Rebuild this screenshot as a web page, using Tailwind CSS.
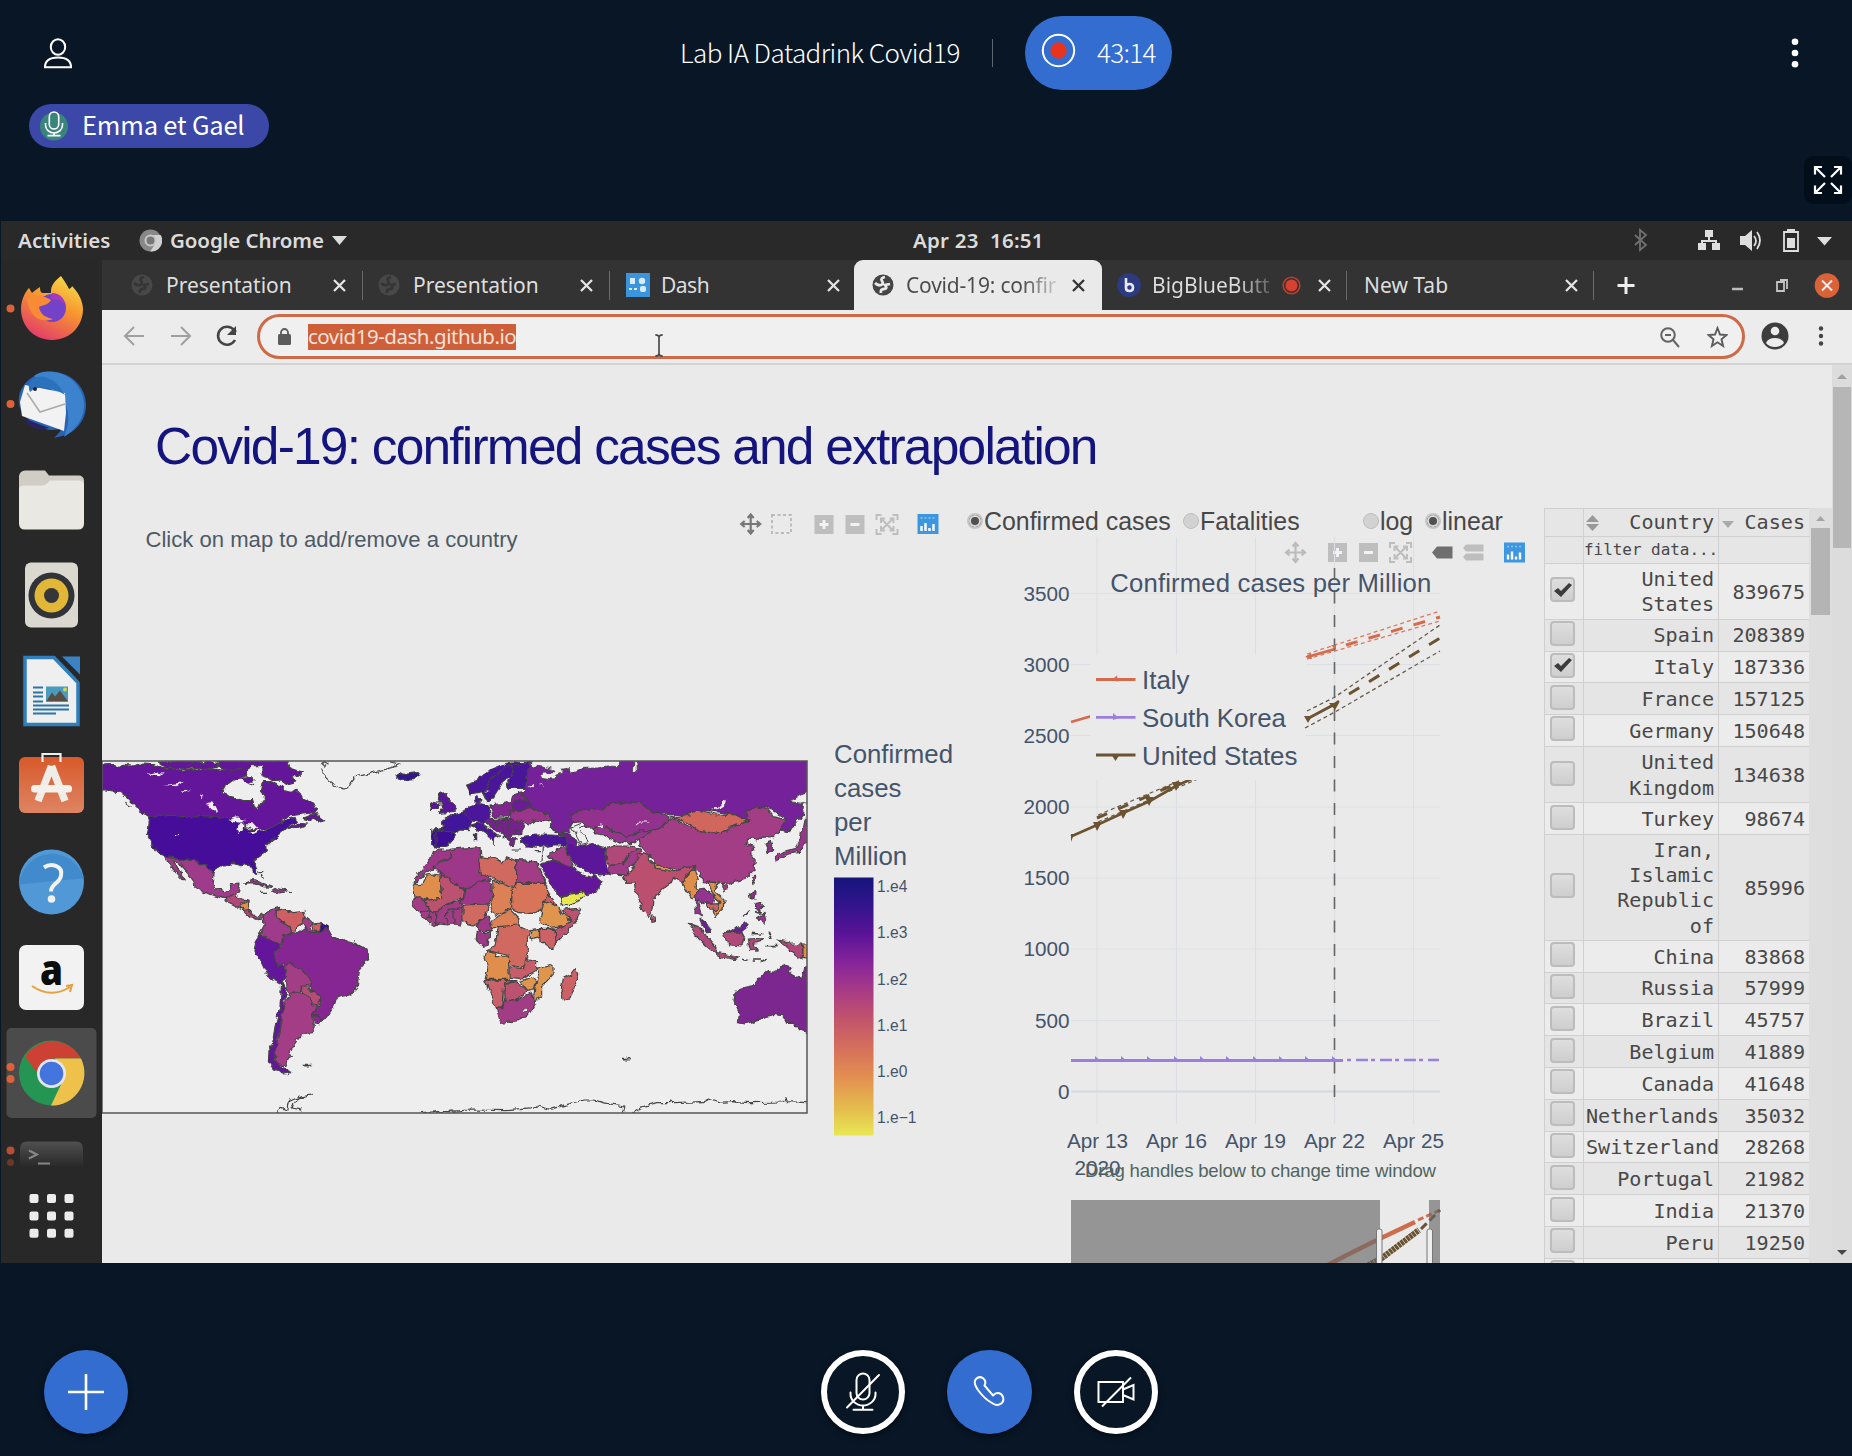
<!DOCTYPE html>
<html lang="en">
<head>
<meta charset="utf-8">
<title>Lab IA Datadrink Covid19</title>
<script src="https://cdn.jsdelivr.net/npm/@tailwindcss/browser@4"></script>
</head>
<body class="w-[1852px] h-[1456px] overflow-hidden bg-[#081626] flex flex-col font-['Noto_Sans',sans-serif]">

<!-- Conference header -->
<header class="h-[221px] shrink-0 relative text-white font-['Noto_Sans_CJK_SC',sans-serif]">
  <div class="h-[104px] flex items-start pl-[43px] pr-[48px]">
    <svg class="w-[30px] h-[32px] mt-[38px]" viewBox="0 0 30 32" fill="none" stroke="#fff" stroke-width="2"><ellipse cx="15" cy="9" rx="7.2" ry="7.7"/><path d="M2 29.300 C2 22 7 19.600 15 19.600 S28 22 28 29.300 Z"/></svg>
    <div class="flex items-center h-[74px] mt-4 ml-[607px]">
      <h1 class="text-[26px] font-light leading-none w-[280px] whitespace-nowrap tracking-[-0.530px] -mt-[3px]">Lab IA Datadrink Covid19</h1>
      <span class="w-px h-7 bg-[#5c6673] ml-8"></span>
      <div class="ml-[32px] w-[147px] h-[74px] rounded-[37px] bg-[#336dcf] flex items-center pl-4 gap-[21px]">
        <svg class="w-[35px] h-[35px] -mt-1.5" viewBox="0 0 35 35"><circle cx="17.500" cy="17.500" r="15.700" fill="none" stroke="#fff" stroke-width="2"/><circle cx="17.500" cy="17.500" r="8.200" fill="#e8341f"/></svg>
        <span class="text-[26px] font-light leading-none tracking-[-0.7px] -mt-[3px]">43:14</span>
      </div>
    </div>
    <svg class="w-[18px] h-[34px] mt-9 ml-auto" viewBox="0 0 18 34" fill="#fff"><circle cx="9" cy="5.700" r="3.300"/><circle cx="9" cy="17" r="3.300"/><circle cx="9" cy="28.200" r="3.300"/></svg>
  </div>
  <div class="ml-[29px] w-[240px] h-11 rounded-full bg-[#3b48a8] flex items-center pl-[11px] gap-[14px]">
    <svg class="w-[28px] h-[30px]" viewBox="0 0 28 30" fill="none" stroke="#fff" stroke-width="1.600"><circle cx="14" cy="15.500" r="14" fill="#39857c" stroke="none"/><rect x="9.300" y="1" width="9.400" height="17" rx="4.700"/><path d="M5.500 12v2a8.500 8 0 0 0 17 0v-2M14 22v2.500M7.500 24.600h13"/></svg>
    <span class="text-[25.500px] leading-none whitespace-nowrap tracking-[-0.200px] -mt-[4px]">Emma et Gael</span>
  </div>
  <button class="absolute right-0 top-[156px] w-12 h-12 rounded-[9px] bg-[#030e1b] flex items-center justify-center">
    <svg class="w-[30px] h-[30px]" viewBox="0 0 30 30" fill="none" stroke="#fff" stroke-width="2.200"><path d="M12 12 2 2M2 9.500V2h7M18 12 28 2M21 2h7v7.500M12 18 2 28M2 20.500V28h7M18 18l10 10M21 28h7v-7.500"/></svg>
  </button>
</header>

<!-- Shared desktop -->
<main class="h-[1042px] shrink-0 ml-px bg-[#282828] flex flex-col overflow-hidden">
  <div class="h-[39px] shrink-0 bg-[#292929] flex items-center text-[20.500px] font-semibold text-[#dcdcdc] leading-none relative -tracking-[0.1px]">
    <span class="ml-[17px] w-[121px] tracking-[0.100px]">Activities</span>
    <svg class="w-[23px] h-[23px]" viewBox="0 0 23 23"><circle cx="11.500" cy="11.500" r="11" fill="#888"/><path d="M11.500 6h10.200a11 11 0 0 1-10.500 16.500l5-8z" fill="#d0d0d0"/><circle cx="11.500" cy="11.500" r="5" fill="#777" stroke="#c8c8c8" stroke-width="2"/></svg>
    <span class="ml-2 w-[162px] whitespace-nowrap">Google Chrome</span>
    <svg class="w-[15px] h-[9px]" viewBox="0 0 15 9" fill="#dcdcdc"><path d="M0 0h15L7.500 9z"/></svg>
    <span class="absolute left-[912px] whitespace-pre tracking-[0.250px]">Apr 23  16:51</span>
    <svg class="absolute left-[1625px] top-0 w-[226px] h-[39px]" viewBox="1626 221 226 39">
      <path d="M1635 235l11 10-6 5v-20l6 5-11 10" fill="none" stroke="#707070" stroke-width="1.800"/>
      <g fill="#dedede"><path d="M1705 230h8v7h-8zM1698 243h8v7h-8zM1712 243h8v7h-8zM1740 236h5l7-6v21l-7-6h-5zM1817 237h15l-7.500 8.500z"/><path d="M1708 237h2v3h7v3h-2v-1h-12v1h-2v-3h7z"/><path d="M1787 238h8v10h-8zM1787 229h8v3h-8z"/></g>
      <path d="M1784 232h14v19h-14zM1754 236q4 5 0 10M1757 232q6 8 0 17" fill="none" stroke="#dedede" stroke-width="1.800"/>
    </svg>
  </div>

  <div class="flex flex-1 min-h-0">
    <!-- Dock -->
    <aside class="w-[101px] shrink-0 bg-[#282828] flex flex-col [&>svg]:w-[101px] [&>svg]:shrink-0">
      <svg class="h-[95px]" viewBox="1 260 101 95">
        <defs><linearGradient id="ff" x1=".8" y1="0" x2=".3" y2="1"><stop offset="0" stop-color="#f5e04c"/><stop offset=".45" stop-color="#f7952f"/><stop offset="1" stop-color="#e33a6c"/></linearGradient></defs>
        <circle cx="10.500" cy="308.500" r="4" fill="#dc6338"/>
        <path d="M61 276c5 7 6 9 8 13 2-1 3-2 3-3 6 6 11 15 11 23 0 17-13 31-31 31S21 326 21 309c0-10 5-18 8-21l3 5c2-2 5-4 8-6 0 4 1 5 2 6l9 0c-1-8 5-13 10-17z" fill="url(#ff)"/>
        <circle cx="52" cy="308" r="14" fill="#7442c8"/><path d="M27 299c7-4 16-4 24 1-3 5-8 5-12 7 1 8 8 11 14 12-13 5-24-3-26-20z" fill="#f98b37"/><path d="M52 293c9 0 13 7 13 12-4-5-8-6-14-6z" fill="#a23bbd"/>
      </svg>
      <svg class="h-[95.500px]" viewBox="1 355 101 95.500">
        <circle cx="10.500" cy="404" r="4" fill="#dc6338"/>
        <path d="M20 392c6-14 20-22 35-20 18 2 31 16 31 33 0 16-11 28-24 31l-8 2c4-4 6-6 8-10-10 4-22 2-33-8-10-8-12-18-9-28z" fill="#2863b4"/><path d="M34 376c10-8 32-5 42 8 14 17 10 39-12 53 7-17 5-30-3-40z" fill="#3c82cc"/>
        <path d="M25 385l40 8 1 20-2 18-42-15-2-14z" fill="#f2f2f2"/><path d="M27 393l13 19 25-8" fill="none" stroke="#aaa" stroke-width="1.500"/><path d="M30 392c8-8 25-4 35 3-6-12-16-20-28-18-7 2-10 8-7 15z" fill="#2b72bd"/><path d="M23 418l26 10-10 2c-8-3-13-6-16-12z" fill="#282460"/><circle cx="35" cy="389" r="2" fill="#223"/>
      </svg>
      <svg class="h-[95.500px]" viewBox="1 450.500 101 95.500"><path d="M19 476a6 6 0 0 1 6-6h20l4 5h30a5 5 0 0 1 5 5v40H19z" fill="#cfcdc4"/><path d="M19 489q0-4 5-4h18q4 0 8-5h29q5 0 5 5v38q0 6-6 6H25q-6 0-6-6z" fill="#e9e8e3"/></svg>
      <svg class="h-[95.500px]" viewBox="1 546 101 95.500"><rect x="25" y="562.500" width="53" height="65" rx="6" fill="#dbd8cf"/><circle cx="51.500" cy="595.500" r="23" fill="#303337"/><circle cx="51.500" cy="595.500" r="17" fill="#e2b636"/><circle cx="51.500" cy="595.500" r="7.500" fill="#34363a"/></svg>
      <svg class="h-[95.500px]" viewBox="1 641.500 101 95.500"><path d="M25 657h29l24 25v42H25z" fill="#efefef" stroke="#2f7fbd" stroke-width="3.500"/><path d="M57 655h5l18 19v8z" fill="#282828"/><path d="M62 656h18v18z" fill="#3a83c4"/><path d="M33 687h10M33 692h10M33 696h10M33 701h10M33 705h36M33 709h36M33 713h23" stroke="#2c75a8" stroke-width="2"/><rect x="46" y="686" width="22" height="15" fill="#4b9ac0"/><path d="M46 701l6-9 3 4 5-6 8 11z" fill="#564d43"/><circle cx="65" cy="689" r="2" fill="#cdda50"/></svg>
      <svg class="h-[95.500px]" viewBox="1 737 101 95.500"><defs><linearGradient id="sw" x2="0" y2="1"><stop stop-color="#d85a2b"/><stop offset="1" stop-color="#de8462"/></linearGradient></defs><rect x="19" y="757" width="65" height="56" rx="6" fill="url(#sw)"/><path d="M42.500 762v-8h18v8" fill="none" stroke="#eee" stroke-width="2.200"/><path d="M51.500 766L38 801M51.500 766l13.500 35" stroke="#f0ece8" stroke-width="7.500" fill="none"/><rect x="31" y="785" width="41" height="7.500" rx="3.500" fill="#f4f0ec"/></svg>
      <svg class="h-[95.500px]" viewBox="1 832.500 101 95.500"><circle cx="51.500" cy="881.500" r="32.500" fill="#5098d6"/><path d="M19.500 884a32.500 32.500 0 0 1 64-6q-30 2-64 6z" fill="#418bcd"/><path d="M44 867c7-5 19-2 17 8-1 8-10 8-10 16" stroke="#f2f2f2" stroke-width="4" fill="none"/><circle cx="51.500" cy="898.500" r="3.800" fill="#f2f2f2"/></svg>
      <svg class="h-[95.500px]" viewBox="1 928 101 95.500"><rect x="19" y="945" width="65" height="65" rx="7" fill="#f2f2f2"/><text x="51.500" y="985" font-family="Open Sans,sans-serif" font-weight="800" font-size="43" text-anchor="middle" fill="#0c0c0c" textLength="23" lengthAdjust="spacingAndGlyphs">a</text><path d="M32 986q19 13 38 1M66 986l6-1-2 7" fill="none" stroke="#e6a03c" stroke-width="2"/></svg>
      <svg class="h-[97px]" viewBox="1 1023.500 101 97"><rect x="6.500" y="1027.500" width="90" height="90" rx="5" fill="#4b4b4b"/><circle cx="10.500" cy="1066.500" r="4" fill="#dc6338"/><circle cx="10.500" cy="1078.500" r="4" fill="#dc6338"/><circle cx="51.500" cy="1072.500" r="32.500" fill="#259553"/><path d="M25 1056a32.500 32.500 0 0 1 56 2H52l-15 14z" fill="#cc4133"/><path d="M62 1082l-11 23a32.500 32.500 0 0 0 30-47H55z" fill="#eec24a"/><circle cx="51.500" cy="1073" r="14.500" fill="#e6e6ee"/><circle cx="51.500" cy="1073" r="11.800" fill="#4474dd"/></svg>
      <svg class="h-[60px]" viewBox="1 1120.500 101 60"><defs><linearGradient id="tm" x2="0" y2="1"><stop stop-color="#505050"/><stop offset="1" stop-color="#292929"/></linearGradient></defs><circle cx="10.500" cy="1150" r="4" fill="#b54f31"/><circle cx="10.500" cy="1162" r="3.500" fill="#6b3726"/><path d="M20 1166v-18q0-7 7-7h49q7 0 7 7v18z" fill="url(#tm)"/><path d="M29 1150l8 4-8 4M38 1163h12" fill="none" stroke="#888" stroke-width="2"/></svg>
      <svg class="h-[80px]" viewBox="1 1180.500 101 80" fill="#ececec"><g id="dots"><rect x="29.500" y="1193.500" width="9" height="9" rx="2"/><rect x="47" y="1193.500" width="9" height="9" rx="2"/><rect x="64.500" y="1193.500" width="9" height="9" rx="2"/></g><use href="#dots" y="17.500"/><use href="#dots" y="34.700"/></svg>
    </aside>

    <!-- Browser window -->
    <section class="flex-1 min-w-0 flex flex-col bg-[#eaeaea]">
      <div class="h-[50px] shrink-0 bg-[#333] flex items-center text-[21px] text-[#dedede] leading-none">
        <div class="w-[261px] flex items-center border-r border-[#6a6a6a] h-[29px] pl-[29px]">
          <svg class="w-[22px] h-[22px]" viewBox="0 0 22 22"><circle cx="11" cy="11" r="10.500" fill="#484848"/><path d="M3 9q3 3 6 2t1-4 3-4M9 19q-1-4 3-4t1-4l5-1" fill="none" stroke="#353535" stroke-width="2.800"/></svg>
          <span class="ml-[13px] w-[167px]">Presentation</span>
          <svg class="w-[13px] h-[13px]" viewBox="0 0 13 13" stroke="#e4e4e4" stroke-width="2.300"><path d="M1 1l11 11M12 1 1 12"/></svg>
        </div>
        <div class="w-[247px] flex items-center border-r border-[#6a6a6a] h-[29px] pl-[15px]">
          <svg class="w-[22px] h-[22px]" viewBox="0 0 22 22"><circle cx="11" cy="11" r="10.500" fill="#484848"/><path d="M3 9q3 3 6 2t1-4 3-4M9 19q-1-4 3-4t1-4l5-1" fill="none" stroke="#353535" stroke-width="2.800"/></svg>
          <span class="ml-[13px] w-[167px]">Presentation</span>
          <svg class="w-[13px] h-[13px]" viewBox="0 0 13 13" stroke="#e4e4e4" stroke-width="2.300"><path d="M1 1l11 11M12 1 1 12"/></svg>
        </div>
        <div class="w-[244px] flex items-center h-[29px] pl-[16px]">
          <svg class="w-[24px] h-[24px]" viewBox="0 0 24 24"><rect width="24" height="24" fill="#3b95dc"/><g fill="#d9ecfa"><rect x="4" y="5" width="5" height="6"/><circle cx="16" cy="8" r="3.200"/><rect x="3" y="15" width="3" height="2"/><rect x="8" y="15" width="3" height="2"/><rect x="14" y="13" width="6" height="6" rx="2"/></g></svg>
          <span class="ml-[11px] w-[166px] tracking-[-0.500px]">Dash</span>
          <svg class="w-[13px] h-[13px]" viewBox="0 0 13 13" stroke="#e4e4e4" stroke-width="2.300"><path d="M1 1l11 11M12 1 1 12"/></svg>
        </div>
        <div class="w-[248px] self-stretch bg-[#eaeaea] rounded-t-[9px] flex items-center pl-[18px] text-[#4b4b4b]">
          <svg class="w-[22px] h-[22px]" viewBox="0 0 22 22"><circle cx="11" cy="11" r="10.500" fill="#454545"/><path d="M3 9q3 3 6 2t1-4 3-4M9 19q-1-4 3-4t1-4l5-1" fill="none" stroke="#eaeaea" stroke-width="2.800"/></svg>
          <span class="ml-3 w-[166px] whitespace-nowrap bg-linear-to-r from-[#4b4b4b] from-70% to-transparent to-95% bg-clip-text text-transparent tracking-[-0.2px] py-1">Covid-19: confir</span>
          <svg class="w-[13px] h-[13px]" viewBox="0 0 13 13" stroke="#333" stroke-width="2.300"><path d="M1 1l11 11M12 1 1 12"/></svg>
        </div>
        <div class="w-[245px] flex items-center h-[29px] border-r border-[#6a6a6a] pl-[15px]">
          <svg class="w-[24px] h-[24px]" viewBox="0 0 24 24"><circle cx="12" cy="12" r="12" fill="#2d3a80"/><path d="M9 5v10q0 3 3.500 3t3.500-3.500-3.500-3.500T9 14" fill="none" stroke="#e7e7f5" stroke-width="2.600"/></svg>
          <span class="ml-[11px] w-[130px] whitespace-nowrap bg-linear-to-r from-[#dedede] from-65% to-transparent to-100% bg-clip-text text-transparent py-1">BigBlueButt</span>
          <svg class="w-[19px] h-[19px]" viewBox="0 0 19 19"><circle cx="9.500" cy="9.500" r="8.300" fill="none" stroke="#c23a2d" stroke-width="1.600"/><circle cx="9.500" cy="9.500" r="6" fill="#d8402f"/></svg>
          <svg class="w-[13px] h-[13px] ml-[17px]" viewBox="0 0 13 13" stroke="#e4e4e4" stroke-width="2.300"><path d="M1 1l11 11M12 1 1 12"/></svg>
        </div>
        <div class="w-[247px] flex items-center h-[29px] border-r border-[#6a6a6a] pl-[17px]">
          <span class="w-[201px]">New Tab</span>
          <svg class="w-[13px] h-[13px]" viewBox="0 0 13 13" stroke="#e4e4e4" stroke-width="2.300"><path d="M1 1l11 11M12 1 1 12"/></svg>
        </div>
        <svg class="w-[258px] h-[50px]" viewBox="1594 260 258 50"><path d="M1617.500 285.500h17M1626 277v17" stroke="#eee" stroke-width="3"/><path d="M1732 289h11" stroke="#bbb" stroke-width="2.500"/><path d="M1777 282h7v9h-7zM1780 280h7v9" fill="none" stroke="#c4c4c4" stroke-width="1.800"/><circle cx="1827" cy="285.500" r="12.300" fill="#da6238"/><path d="M1822 280.500l10 10m0-10-10 10" stroke="#f6ece8" stroke-width="2"/></svg>
      </div>
      <div class="h-[55px] shrink-0 border-b-2 border-[#d2d2d2] bg-[#ececec] flex items-start relative">
        <svg class="w-[155px] h-[52px]" viewBox="102 310 155 52" fill="none" stroke="#a0a0a0" stroke-width="2"><path d="M144 336h-18M134 327l-9 9 9 9M171 336h18M181 327l9 9-9 9"/><path d="M235 340a9 9 0 1 1-1-10l2 2" stroke="#444" stroke-width="2.600"/><path d="M236 326v9h-9z" fill="#444" stroke="none"/></svg>
        <div class="w-[1488px] h-[45px] mt-1 rounded-full border-3 border-[#cf6a47] bg-[#f0f0f0] flex items-center pl-[18px] pr-[14px]">
          <svg class="w-[13px] h-[18px]" viewBox="0 0 13 18"><rect y="6" width="13" height="11" rx="1.500" fill="#5b5b5b"/><path d="M3 7V4.500a3.500 3.500 0 0 1 7 0V7" fill="none" stroke="#5b5b5b" stroke-width="1.800"/></svg>
          <span class="ml-[17px] w-[208px] h-[26px] bg-[#cf5f38] text-[#f3e1da] text-[20.500px] leading-[24px] whitespace-nowrap tracking-[-0.480px]">covid19-dash.github.io</span>
          <svg class="ml-auto w-[20px] h-[22px]" viewBox="0 0 20 22" fill="none" stroke="#636363" stroke-width="2"><circle cx="8" cy="9" r="6.800"/><path d="M13 14l6 7M5 9h6"/></svg>
          <svg class="ml-[27px] w-[21px] h-[22px]" viewBox="0 0 21 22" fill="none" stroke="#5c5c5c" stroke-width="1.900"><path d="M10.500 2l2.500 6.500 6.500.5-5 4.300 1.600 6.700-5.600-3.700-5.600 3.700 1.600-6.700L1.500 9l6.500-.5z"/></svg>
        </div>
        <svg class="w-[106px] h-[52px]" viewBox="1745 310 106 52"><circle cx="1775" cy="336" r="13.500" fill="#3d3d3d"/><circle cx="1775" cy="331" r="4.300" fill="#ececec"/><path d="M1766 343q2-5 9-5t9 5q-3 4-9 4t-9-4z" fill="#ececec"/><g fill="#444"><circle cx="1821" cy="328.500" r="2.200"/><circle cx="1821" cy="336" r="2.200"/><circle cx="1821" cy="343.500" r="2.200"/></g></svg>
        <svg class="absolute left-[551px] top-[23px] w-[12px] h-[25px] z-10" viewBox="0 0 12 27" fill="none" stroke="#4a4a4a" stroke-width="1.800"><path d="M2 2q4 0 4 3v17q0 3-4 3M10 2q-4 0-4 3v17q0 3 4 3"/></svg>
      </div>

      <div class="flex-1 min-h-0 flex">
        <div class="w-[1730px] shrink-0 flex flex-col overflow-hidden font-['Liberation_Sans',Arial,sans-serif]">
          <h2 class="h-[140px] shrink-0 pl-[53px] pt-[51px] text-[51.500px] leading-[60px] tracking-[-1.800px] text-[#14147e] whitespace-nowrap">Covid-19: confirmed cases and extrapolation</h2>
          <div class="flex flex-1 min-h-0">

            <!-- World map figure -->
            <svg class="w-[852px] h-[758px] shrink-0" viewBox="102 505 852 758" font-family="Liberation Sans,Arial,sans-serif">
              <defs>
                <linearGradient id="cb" x2="0" y2="1"><stop stop-color="#17147c"/><stop offset=".1" stop-color="#30148c"/><stop offset=".22" stop-color="#5b1398"/><stop offset=".33" stop-color="#86259a"/><stop offset=".44" stop-color="#a83b85"/><stop offset=".55" stop-color="#c2546b"/><stop offset=".67" stop-color="#d6725a"/><stop offset=".78" stop-color="#e39150"/><stop offset=".9" stop-color="#e4be4d"/><stop offset="1" stop-color="#e8e752"/></linearGradient>
                <clipPath id="mapclip"><rect x="102" y="761" width="705" height="352"/></clipPath>
                <filter id="coast" filterUnits="userSpaceOnUse" x="95" y="755" width="720" height="365"><feTurbulence type="fractalNoise" baseFrequency=".16" numOctaves="2" seed="4"/><feDisplacementMap in="SourceGraphic" scale="6" xChannelSelector="R" yChannelSelector="G"/></filter>
                <g id="zoomtools" fill="#bebebe"><path d="M0 0h19v19H0z"/><path d="M31 0h19v19H31z"/><path d="M5 9.500h9M9.500 5v9M36 9.500h9" stroke="#f2f2f2" stroke-width="3"/><path d="M62 5V0h5M78 0h5v5M83 14v5h-5M67 19h-5v-5" fill="none" stroke="#bebebe" stroke-width="2"/><path d="M67 4l11 11M78 4 67 15M66.500 8V3.500h4M75 3.500h4V8M79 11v4.500h-4M70.500 15.500h-4V11" fill="none" stroke="#bebebe" stroke-width="2"/></g>
                <g id="logo"><rect width="21" height="20" fill="#3d97e0"/><path d="M4 17v-5M8 17V9M12 17v-3M16 17v-7" stroke="#fff" stroke-width="2.400"/><path d="M3 4h15" stroke="#8cc4f2" stroke-width="1.500" stroke-dasharray="2 2"/></g>
                <path id="move" d="M-9 0H9M0-9V9M-6-3l-3.500 3L-6 3M6-3l3.500 3L6 3M-3-6l3-3.500L3-6M-3 6l3 3.500L3 6" fill="none" stroke-width="2.200"/>
              </defs>
              <text x="145.500" y="546.500" font-size="22.100" fill="#4d5a66">Click on map to add/remove a country</text>
              <use href="#move" x="750.700" y="524" stroke="#777"/>
              <rect x="772" y="515" width="19" height="18" fill="none" stroke="#bbb" stroke-width="2" stroke-dasharray="3 2.500"/>
              <use href="#zoomtools" x="814.500" y="515"/><use href="#logo" x="917.500" y="514"/>

              <rect x="102" y="761" width="705" height="352" fill="#eeeeee"/>
              <g clip-path="url(#mapclip)"><g filter="url(#coast)" stroke="#444" stroke-width="3.500" stroke-linejoin="round">
                <g transform="translate(90 740) scale(.33333)">
                  <path fill="#63159a" d="M30 76L60 74 80 80 100 76 125 78 150 72 190 74 205 80 240 86 270 92 300 88 335 92 370 88 420 92 450 84 470 92 465 110 430 120 405 138 395 155 420 172 460 182 485 182 490 200 502 210 510 195 524 175 514 155 520 125 545 125 570 135 585 152 605 157 618 148 630 160 640 178 665 190 680 205 672 218 640 222 600 228 580 240 566 255 540 262 520 268 490 270 440 240 415 232 175 228 150 215 135 195 110 170 90 155 30 148z"/>
                  <path fill="#63159a" d="M385 62L590 62 600 85 637 97 625 108 608 106 617 125 592 132 575 120 548 122 530 112 515 108 520 78 490 76 470 90 450 85 420 96 400 90 385 75zM205 66L290 64 380 66 385 82 345 88 300 84 260 88 225 80zM640 235L670 222 680 215 690 232 704 242 690 246 672 238 655 240zM595 262l30-12 25 2-35 14z"/>
                  <path fill="#45109a" d="M175 228L415 232 440 240 480 272 525 270 566 255 590 240 615 232 620 245 590 262 570 280 545 300 530 315 532 335 505 350 492 362 500 385 499 403 488 400 478 372 450 377 430 370 405 378 385 378 372 395 367 398 345 375 325 370 310 358 265 358 228 350 200 335 185 310 172 285 178 245z"/>
                  <path fill="#eee" stroke="none" d="M170 103l25-6 27 4-15 8zM218 135l35-4 32-6-25 14zM272 154l28-3-20 7zM330 168l10-5-6 12zM348 190l18-4 8 12 8 18-14-8-12-12zM415 240l25-8 25 8-12 8-20-2zM445 255l15-8-2 25-10 10-5-12zM465 250l25 0 12 14-15 6-8-10-8-2zM478 278l50-13-40 18zM258 285h6v4h-6z"/>
                  <path fill="#63159a" d="M450 118l30-8 15 12-20 4M475 126l20 8"/>
                  <path fill="#9e3a8a" d="M228 350L265 358 310 358 330 372 345 375 365 398 372 402 370 425 378 445 400 452 418 448 424 434 450 432 446 448 435 465 420 480 405 476 375 468 345 458 315 442 312 425 295 402 270 375 248 362 262 385 283 420 275 418 255 395 240 375z"/>
                  <path fill="#ae4878" d="M405 476L435 463 445 476 477 480 474 505 482 520 500 530 515 520 523 532 500 538 480 530 460 510 430 495 412 487z"/>
                  <path fill="#e08c4c" d="M448 495L477 482 474 508 463 512z"/>
                  <path fill="#8d3b83" d="M465 430L490 420 520 432 545 442 520 440 490 428zM545 455L560 444 588 452 570 459zM512 457h18M595 457h14M505 395h18M514 402l6 15M106 190l16 12"/>
                  <path fill="#9e3a8a" d="M520 525L545 508 570 502 560 520 572 545 600 560 602 580 578 590 572 614 548 603 525 590 508 585 522 560z"/>
                  <path fill="#ce6064" d="M557 512L575 508 610 518 642 514 645 530 640 548 620 560 618 576 602 583 598 560 575 545 562 535z"/>
                  <path fill="#a03c88" d="M645 530L665 545 662 568 680 578 655 578 645 562 638 548z"/><path fill="#ce6064" d="M667 552L694 549 691 574 673 574z"/><path fill="#30128c" d="M694 549L713 562 702 577 690 573z"/>
                  <path fill="#862893" d="M578 590L602 582 620 580 645 562 655 578 690 576 713 565 728 592 760 600 800 612 833 630 836 655 808 690 803 730 790 757 760 768 738 778 732 800 712 828 700 842 668 820 690 795 692 772 664 750 662 720 640 695 610 680 585 672 560 672 550 650 560 630 575 618z"/>
                  <path fill="#8a2892" d="M668 820L700 840 690 851 670 849z"/>
                  <path fill="#64169c" d="M508 585L525 590 548 603 572 615 555 635 552 655 562 672 582 675 585 715 575 730 545 714 528 697 508 655 492 632 498 605z"/>
                  <path fill="#a33c86" d="M585 675L605 670 620 682 640 692 660 718 664 735 640 738 630 755 600 758 588 745z"/>
                  <path fill="#64169c" d="M575 728L590 758 582 790 572 850 560 920 552 960 570 980 608 997 585 1002 550 987 535 965 537 935 548 910 555 860 570 800z"/>
                  <path fill="#a33c86" d="M600 758L630 756 640 765 665 778 668 795 688 790 668 820 665 848 675 860 670 877 635 882 632 893 612 896 622 905 610 920 600 937 606 947 590 958 588 976 568 976 555 958 562 920 575 850 580 800z"/>
                  <path fill="#b34d78" d="M633 742L655 735 664 752 690 772 686 792 668 792 660 775 638 762z"/>
                  <path fill="#64169c" d="M640 973h26l-8 5h-14z"/>
                  <path fill="none" d="M692 70q14-8 25 2l-12 10zM695 85l10 25 20 20 18 12 28 6 8-18 16-20 35-6 40-12 40-10 20-10-30-6M560 1118l10-16 20 8 5-24 25-12 50-11-50 16-14 22 24 5 8 14M1015 1118l20 0 10-4 60 2 20-6"/>
                  <path fill="#33128f" d="M915 105L925 98 945 103 985 98 992 108 970 119 935 121 920 112z"/>
                </g>
                <g transform="translate(440 740) scale(.33333)">
                  <path fill="#5a149a" d="M0 160L18 158 30 182 52 203 48 213 20 218 -2 220 10 205 2 188 -5 178zM-28 190L-12 182 0 195 -5 208 -30 208z"/>
                  <path fill="#3c1096" d="M-25 270L0 268 45 275 40 295 20 318 -5 323 -25 316zM-12 268v50"/>
                  <path fill="#43129a" d="M-8 268L12 262 5 245 22 232 50 222 75 215 95 230 92 250 88 272 60 270 45 278 0 270z"/>
                  <path fill="#4c159c" d="M70 217L90 200 110 190 145 195 152 235 130 245 95 240z"/><path fill="#4c159c" d="M105 185L108 168 127 178 118 190z"/>
                  <path fill="#48129a" d="M80 132L110 122 150 90 200 70 270 66 268 90 260 145 205 145 200 125 215 105 190 120 178 142 172 152 158 174 140 182 128 155 90 162z"/><path fill="none" d="M135 160l20-45 50-40 15 5-5 25M220 80l22-5"/>
                  <path fill="#80278f" d="M150 195L210 188 215 165 245 158 270 185 280 205 215 215 210 230 160 232z"/><path fill="#6a1d98" d="M215 195l25-18 30 8 6 18-55 6z"/>
                  <path fill="#9b358c" d="M210 215L280 205 330 225 335 240 310 245 285 240 270 252 250 245 215 240z"/>
                  <path fill="#4c159c" d="M92 255L130 245 135 260 155 272 178 290 165 294 160 310 150 290 130 275 110 270zM103 280h10v22h-10z"/>
                  <path fill="#75248f" d="M135 240L200 235 252 250 245 280 215 285 210 295 235 300 212 318 195 290 165 268 150 262z"/><path fill="none" d="M152 235l20 20 28-18 10 30 30 4M185 260l5 30 25-5M215 330h25"/>
                  <path fill="#4a139a" d="M245 290L290 285 340 285 375 290 385 315 340 315 300 322 260 318 245 305z"/>
                  <path fill="#75229a" d="M270 66L270 50 1120 50 1110 155 1075 165 1050 185 1090 195 1088 225 1060 260 1040 275 1020 270 1035 235 980 200 935 205 925 240 890 225 830 215 780 210 750 222 690 225 640 215 600 190 560 185 500 195 495 208 420 212 395 225 400 245 385 280 350 275 330 262 335 235 330 225 280 205 270 185 245 165 255 150 262 100z"/>
                  <path fill="#eee" stroke-width="2.500" d="M275 50L540 50 538 80 500 78 470 84 430 85 400 98 388 97 385 85 360 88 370 98 345 108 335 120 305 115 300 100 345 98 340 88 275 76zM582 60h8l2 34-12 6zM1050 185l30-22 22-8 20 0 0 40z"/>
                  <path fill="#eee" stroke="none" d="M265 140l18-5-2 10zM300 135l8-3 4 8zM812 210q30-5 42-30 6 5 0 15-15 18-42 15zM136 156l10-2-2 5z"/>
                  <path fill="#93308e" d="M395 225L420 212 495 208 500 195 560 185 600 190 640 215 690 232 660 265 640 272 600 272 560 290 530 280 500 262 470 262 440 265 425 245 400 248z"/>
                  <path fill="#963490" d="M460 262L500 262 530 280 560 290 600 272 640 272 615 296 570 312 560 300 540 310 490 285 465 280z"/>
                  <path fill="#6a1d98" d="M345 275L385 285 410 300 415 315 385 315 375 290z"/>
                  <path fill="#eee" stroke-width="3" d="M395 262L428 248 436 256 415 265 433 285 442 312 425 316 412 290z"/>
                  <path fill="none" stroke="#eee" d="M588 255l10-9h30M474 260l10-6v10"/>
                  <path fill="#a33d85" d="M640 272L665 262 690 235 720 245 780 275 840 280 925 240 920 215 950 200 980 205 1000 230 1037 238 1018 275 1000 290 960 292 945 300 940 292 915 310 948 320 930 340 946 360 942 390 915 415 860 432 830 428 790 425 775 390 720 390 650 375 625 345 605 320 600 298zM845 438l15-3 4 12-14 8zM932 410l13-5-6 26z"/>
                  <path fill="#d0665c" d="M695 232L750 222 768 210 800 216 830 222 890 225 925 242 870 262 840 280 780 275 740 248z"/>
                  <path fill="#8e2f90" d="M975 312L995 305 1001 330 985 335z"/><path fill="#9a358d" d="M1003 352L1030 335 1065 325 1080 300 1085 275 1092 240 1104 235 1104 290 1095 310 1082 337 1045 342 1010 360z"/>
                  <path fill="#5b159a" d="M375 318L390 312 430 320 455 310 497 325 498 370 507 402 480 405 440 397 425 382 405 372 385 345z"/>
                  <path fill="#b04a79" d="M498 330L530 318 572 318 600 325 565 345 550 370 510 377 500 365z"/>
                  <path fill="#9f3a87" d="M507 377L550 372 565 345 598 322 608 340 590 370 560 385 567 407 545 404 505 400z"/>
                  <path fill="#ba506f" d="M595 345L610 338 630 345 625 360 645 378 700 395 740 382 765 380 745 400 728 428 715 425 700 410 692 430 665 450 640 480 635 515 622 532 610 510 590 460 582 432 560 433 550 410 570 395 585 375zM633 525l12 5 3 14-12 4z"/>
                  <path fill="#df8e4c" d="M640 372L700 388 695 397 650 388z"/>
                  <path fill="#df8e4c" d="M745 402L765 385 775 420 765 440 777 470 755 477 740 455 725 430zM805 425L835 430 825 455 852 480 850 505 825 530 820 515 840 490 815 455z"/>
                  <path fill="#96338f" d="M770 450L795 448 825 470 820 490 795 490 775 480 788 530 768 522z"/><path fill="#cc6163" d="M800 490L837 488 830 512 810 510z"/>
                  <path fill="#6c1f98" d="M780 535L800 550 812 577 800 578 785 555zM850 580L880 570 912 545 925 558 905 575z"/>
                  <path fill="#b04a79" d="M748 550L775 560 800 590 828 622 825 640 800 620 770 590zM825 640L860 645 895 652 885 658 830 648zM850 580L905 575 913 592 905 618 875 615 855 600zM925 600L950 598 970 596 960 606 938 610 952 630 932 632zM1010 597L1035 600 1045 612 1085 612 1085 657 1060 640 1035 615z"/>
                  <path fill="none" stroke-width="5" d="M905 655l20 4M935 660h22M960 665l20-10M975 617h38M985 575l8 22M932 580l35 2M910 530l18-20M945 500l20 0M945 515l20 5"/>
                  <path fill="#df8e4c" d="M1086 615L1120 615 1120 660 1086 655z"/>
                  <path fill="#93308e" d="M930 460L948 455 945 478 935 480zM945 490l15-2 10 14-10 2 0 12-12-15zM950 535l25-15 5 20-8 10z"/>
                  <path fill="#7c258f" d="M885 760L890 750 945 735 955 715 970 705 985 695 1000 697 1020 685 1030 675 1055 680 1048 700 1085 720 1095 680 1104 672 1120 672 1120 885 1080 870 1060 850 1040 850 1030 830 1000 826 945 842 915 852 895 848 898 820 882 785z"/>
                  <path fill="#63189a" d="M300 372L335 362 355 365 390 378 400 375 410 395 430 405 455 412 460 400 487 425 470 455 440 468 430 455 380 465 355 468 345 445 320 415 310 390z"/>
                  <path fill="#e8e752" d="M360 470L380 465 430 455 435 468 400 490 368 498z"/>
                  <path fill="#9f3a87" d="M322 350L355 325 375 318 385 345 398 372 385 378 350 365z"/><path fill="none" d="M305 365l5-40 12-6M285 332h15M365 512l55-8"/>
                  <path fill="#9d3788" d="M-5 330L30 330 35 350 0 365 -20 385 -45 400 -78 435 -75 415 -50 385 -30 360 -20 335z"/>
                  <path fill="#9d3788" d="M30 328L120 320 122 345 120 400 152 420 75 450 0 400 -20 378 35 352z"/>
                  <path fill="#df8e4c" d="M-80 435L-50 432 -42 405 -20 402 0 405 5 475 -40 480 -75 470z"/>
                  <path fill="#bb5370" d="M0 402L75 450 70 475 20 490 0 515 -30 515 -48 482 5 475z"/>
                  <path fill="#a23c85" d="M-85 490L-75 472 -60 470 -48 482 -30 515 -10 515 20 490 60 485 68 500 62 555 40 552 20 555 0 552 -15 558 -45 540 -60 515 -80 505z"/><path fill="none" d="M-62 515l25-2 12 25M-10 516v38M20 512v42M42 505v48M20 512l42-6M-45 540l18-12"/>
                  <path fill="#9d3788" d="M75 450L130 420 155 430 158 465 145 492 75 495 55 485 70 475z"/>
                  <path fill="#d0695f" d="M70 495L145 492 140 520 120 545 100 558 85 555 68 540z"/>
                  <path fill="#d0695f" d="M120 350L160 355 190 368 200 350 228 362 226 440 210 438 120 400 118 370z"/>
                  <path fill="#a23c85" d="M228 362L290 365 298 385 318 430 228 430z"/>
                  <path fill="#dc8055" d="M158 420L218 445 215 480 210 505 165 530 150 495 160 465z"/>
                  <path fill="#d87458" d="M228 430L312 430 332 470 310 512 270 520 235 518 215 505 215 480 218 445 226 440z"/>
                  <path fill="#dc8055" d="M155 545L210 508 240 540 235 560 155 560z"/><path fill="#c65d68" d="M320 460l38 42-28-16-18 8z"/>
                  <path fill="#e09550" d="M310 492L330 485 355 500 365 520 395 540 370 560 330 565 298 545z"/>
                  <path fill="#bb5370" d="M365 512L422 504 410 540 380 580 348 608 345 572 395 543z"/>
                  <path fill="#cc6265" d="M298 568L345 568 348 606 338 628 300 600z"/><path fill="#e09550" d="M272 572L298 568 298 590 270 598z"/>
                  <path fill="#d0695f" d="M175 560L235 555 268 570 262 600 262 640 265 670 245 682 210 675 200 645 140 632 165 620z"/>
                  <path fill="#9d3788" d="M108 558L125 540 142 520 150 545 157 572 115 572zM112 577L150 577 145 612 125 617 108 600z"/>
                  <path fill="#df8e4c" d="M140 635L165 640 172 650 205 648 208 718 135 718 145 680 135 650z"/>
                  <path fill="#c65d68" d="M210 680L250 687 258 658 290 665 290 690 245 716 210 712z"/>
                  <path fill="#e09550" d="M290 685L342 675 342 700 305 740 305 770 280 782 285 740 300 710z"/><path fill="#e09550" d="M243 724L275 710 290 725 282 750 262 754z"/>
                  <path fill="#c9606a" d="M133 720L228 722 195 730 188 803 165 800 150 760z"/><path fill="#bb5370" d="M195 730L230 725 262 754 235 775 195 783z"/>
                  <path fill="#a23c85" d="M168 800L188 803 195 783 235 778 274 758 287 790 265 825 235 842 182 850z"/><path fill="#eee" stroke-width="2" d="M245 812l8-7 6 6-8 6z"/>
                  <path fill="#cc6265" d="M408 685L416 705 390 777 370 780 363 750 370 715 395 702z"/>
                  <path fill="none" d="M550 955h16v5h-16zM-60 1118L100 1110 200 1112 280 1106 295 1098 330 1108 380 1094 430 1080 460 1080 500 1090 555 1098 550 1118M580 1118l30-18 40-12h40l5-5 5 5 90-3 15-8 25 10 50-2 50 3 100-2 8-10 5 9 60 3"/>
                </g>
              </g></g>
              <rect x="102" y="761" width="705" height="352" fill="none" stroke="#555" stroke-width="1.500"/>

              <g font-size="25.800" fill="#44546a"><text x="834" y="763">Confirmed</text><text x="834" y="797">cases</text><text x="834" y="830.500">per</text><text x="834" y="864.500">Million</text></g>
              <rect x="834" y="877.500" width="39.500" height="258" fill="url(#cb)"/>
              <g font-size="15.600" fill="#44546a"><text x="877" y="892">1.e4</text><text x="877" y="938">1.e3</text><text x="877" y="984.500">1.e2</text><text x="877" y="1030.500">1.e1</text><text x="877" y="1077">1.e0</text><text x="877" y="1123">1.e−1</text></g>
            </svg>

            <!-- Confirmed cases chart -->
            <div class="w-[590px] shrink-0 flex flex-col">
              <div class="h-[32px] flex items-center text-[24.900px] leading-none text-[#474747] pl-[13px] whitespace-nowrap">
                <i class="w-4 h-4 mr-px rounded-full border-2 border-[#c4c4c4] bg-[#505050] shadow-[inset_0_0_0_2px_#d8d8d8]"></i><span class="w-[199px]">Confirmed cases</span>
                <i class="w-4 h-4 mr-px rounded-full border border-[#bdbdbd] bg-[#d2d2d2]"></i><span class="w-[163px]">Fatalities</span>
                <i class="w-4 h-4 mr-px rounded-full border border-[#bdbdbd] bg-[#d2d2d2]"></i><span class="w-[45px]">log</span>
                <i class="w-4 h-4 mr-px rounded-full border-2 border-[#c4c4c4] bg-[#505050] shadow-[inset_0_0_0_2px_#d8d8d8]"></i><span>linear</span>
              </div>
              <svg class="w-[590px] h-[726px] shrink-0" viewBox="954 537 590 726" font-family="Liberation Sans,Arial,sans-serif">
                <use href="#move" x="1295.500" y="552.500" stroke="#bbb"/>
                <use href="#zoomtools" x="1328" y="543"/>
                <path d="M1432 552.500l5-6h15.500v12H1437z" fill="#6f6f6f"/><path d="M1463 548l3-3.500h17.500v7H1466zM1463 557l3-3.500h17.500v7H1466z" fill="#bebebe"/>
                <use href="#logo" x="1504" y="542.500"/>
                <g stroke="#dcdfe3" stroke-width="1.200"><path d="M1097 537v587M1176.500 537v587M1255.500 537v587M1334.500 537v587M1413.500 537v587M1071 593.500h369M1071 664.500h369M1071 735.500h369M1071 807h369M1071 878h369M1071 949h369M1071 1020.500h369"/><path d="M1071 1091.500h369" stroke="#d3d9e3" stroke-width="2"/></g>
                <g fill="none">
                  <path d="M1071 836.500l26-11.500 26-12 27-12 26-15 40-18" stroke="#6b5230" stroke-width="2.600"/>
                  <path d="M1097 818l79-34" stroke="#6b5230" stroke-width="3" stroke-dasharray="11 12"/>
                  <path d="M1098 815l100-42M1098 822l130-56" stroke="#665a48" stroke-width="1.200" stroke-dasharray="4 3"/>
                  <path d="M1071 722l50-14.500" stroke="#d66a4b" stroke-width="2.600"/>
                </g>
                <g fill="#6b5230"><path d="M1093 822h9l-5 9zM1119 810h9l-5 9zM1145 797h9l-5 9zM1172 782h9l-5 9zM1071 834h3l-3 8z"/></g>
                <rect x="1090" y="655" width="216" height="125" fill="#eaeaea"/>
                <g stroke-width="2.800"><path d="M1096 679.500h39.500" stroke="#d66a4b"/><path d="M1096 717.300h39.500" stroke="#9a80dc"/><path d="M1096 755h39.500" stroke="#6b5230"/></g>
                <path d="M1111 680.500l6-5 1 6z" fill="#d66a4b"/><path d="M1113 713l6 5-6 2z" fill="#9a80dc"/><path d="M1111 754h9l-4.500 7z" fill="#6b5230"/>
                <g font-size="25.900" fill="#44546a"><text x="1142" y="689">Italy</text><text x="1142" y="727">South Korea</text><text x="1142" y="765">United States</text></g>
                <text x="1270.800" y="592" font-size="25.700" text-anchor="middle" fill="#44546a" textLength="321">Confirmed cases per Million</text>
                <g fill="none">
                  <path d="M1307 657l28-8" stroke="#d66a4b" stroke-width="2.800"/><path d="M1346 645l94-28" stroke="#d66a4b" stroke-width="3" stroke-dasharray="12 11.500"/>
                  <path d="M1307 654l133-43M1307 659l133-38" stroke="#d57b62" stroke-width="1.300" stroke-dasharray="4 3"/>
                  <path d="M1307 719l28-15 4-3" stroke="#6b5230" stroke-width="2.800"/><path d="M1349 694l91-56" stroke="#6b5230" stroke-width="3" stroke-dasharray="12 11.500"/>
                  <path d="M1307 711l28-14 105-72M1305 728l30-16 105-61" stroke="#665a48" stroke-width="1.300" stroke-dasharray="4 3"/>
                  <path d="M1334.500 568v530" stroke="#666" stroke-width="1.600" stroke-dasharray="12 11.500"/>
                  <path d="M1071 1060.500h272" stroke="#9a80dc" stroke-width="2.800"/><path d="M1347 1060h92" stroke="#9a80dc" stroke-width="2.500" stroke-dasharray="4 5 12 3"/>
                </g>
                <path d="M1305 657l6-4 1 6zM1331 645h5l0 5z" fill="#d66a4b"/><path d="M1304 716h8l-4 7zM1329 703h10l-4 7z" fill="#6b5230"/>
                <path fill="#9a80dc" d="M1095 1056l7 6h-7zM1121 1056l7 6h-7zM1147 1056l7 6h-7zM1174 1056l7 6h-7zM1200 1056l7 6h-7zM1226 1056l7 6h-7zM1253 1056l7 6h-7zM1279 1056l7 6h-7zM1305 1056l7 6h-7zM1332 1056l7 6h-7z"/>
                <g font-size="20.700" fill="#44546a" text-anchor="end"><text x="1069.500" y="601">3500</text><text x="1069.500" y="672">3000</text><text x="1069.500" y="743">2500</text><text x="1069.500" y="814">2000</text><text x="1069.500" y="885">1500</text><text x="1069.500" y="956">1000</text><text x="1069.500" y="1028">500</text><text x="1069.500" y="1099">0</text></g>
                <g font-size="20.700" fill="#44546a" text-anchor="middle"><text x="1097.500" y="1148">Apr 13</text><text x="1176.500" y="1148">Apr 16</text><text x="1255.500" y="1148">Apr 19</text><text x="1334.500" y="1148">Apr 22</text><text x="1413.500" y="1148">Apr 25</text><text x="1097.500" y="1175">2020</text></g>
                <text x="1085" y="1177" font-size="18.600" fill="#51655f" textLength="351">Drag handles below to change time window</text>
                <path d="M1320 1269l25-13 30-15 40-19" stroke="#cf6c4c" stroke-width="4.500" fill="none"/><path d="M1418 1220l22-10" stroke="#cf6c4c" stroke-width="3" stroke-dasharray="6 3"/>
                <path d="M1365 1267l17-9 37-28" stroke="#6b5230" stroke-width="6" fill="none" stroke-dasharray="3 .6"/><path d="M1421 1229l19-19" stroke="#6b5230" stroke-width="3" fill="none" stroke-dasharray="8 4"/>
                <path d="M1071 1200h309v63h-309zM1429 1200h11v63h-11z" fill="#686868" fill-opacity=".66"/>
                <rect x="1376.500" y="1229" width="5.500" height="40" rx="2" fill="#eee" stroke="#777" stroke-width="1"/><rect x="1427" y="1229" width="5.500" height="40" rx="2" fill="#eee" stroke="#777" stroke-width="1"/>
              </svg>
            </div>

            <!-- Country table -->
            <div class="w-[265px] mt-[3px] shrink-0 font-['DejaVu_Sans_Mono',monospace] text-[20.100px] leading-[25.200px] text-[#484848] text-right">
              <div class="h-[29px] grid grid-cols-[39px_135px_91px] border-y border-l border-[#d0d0d0] bg-[#e6e6e6]">
                <span class="border-r border-[#d0d0d0]"></span>
                <span class="border-r border-[#d0d0d0] flex items-center justify-between pl-0.5 pr-1"><svg class="w-[13px] h-[16px]" viewBox="0 0 13 16" fill="#999"><path d="M0 7h13L6.500 0zM0 9h13l-6.500 7z"/></svg>Country</span>
                <span class="flex items-center justify-between pl-[3px] pr-[5px]"><svg class="w-[12px] h-[7px] mt-1" viewBox="0 0 12 7" fill="#aaa"><path d="M0 0h12L6 7z"/></svg>Cases</span>
              </div>
              <div class="h-[27px] grid grid-cols-[39px_135px_91px] border-b border-l border-[#d0d0d0] bg-[#e6e6e6]">
                <span class="border-r border-[#d0d0d0]"></span>
                <span class="border-r border-[#d0d0d0] text-[16px] text-left tracking-[-0.050px] whitespace-nowrap">filter data...</span><span></span>
              </div>
              <div id="rows"></div>
            </div>
            <div class="flex-1 mt-[3px] bg-[#dedede] pl-[2px]">
              <svg class="w-[19px] h-[20px]" viewBox="0 0 19 20" fill="#a5a5a5"><path d="M5 13l4.500-5 4.500 5z"/></svg>
              <div class="w-[19px] h-[87px] bg-[#b4b4b4]"></div>
            </div>
          </div>
        </div>
        <div class="w-5 shrink-0 bg-[#dcdcdc] flex flex-col items-center">
          <svg class="w-5 h-[22px] shrink-0" viewBox="0 0 20 22" fill="#a0a0a0"><path d="M5 14l5-5 5 5z"/></svg>
          <div class="w-[18px] h-[161px] bg-[#b6b6b6]"></div>
          <svg class="w-5 h-5 mt-auto" viewBox="0 0 20 20" fill="#484848"><path d="M5 7h10l-5 5z"/></svg>
        </div>
      </div>
    </section>
  </div>
</main>

<!-- Call controls -->
<footer class="flex-1 relative">
  <div class="flex items-center pt-[87px] pl-[44px]">
    <button class="w-[84px] h-[84px] rounded-full bg-[#336dcf] flex items-center justify-center shadow-[0_2px_6px_#0008]"><svg class="w-[38px] h-[38px]" viewBox="0 0 38 38" stroke="#fff" stroke-width="2.600"><path d="M19 1v36M1 19h36"/></svg></button>
    <button class="ml-[693px] w-[84px] h-[84px] rounded-full border-6 border-white flex items-center justify-center shadow-[0_2px_6px_#0008]">
      <svg class="w-[36px] h-[40px]" viewBox="0 0 36 40" fill="none" stroke="#fff" stroke-width="2"><rect x="11.500" y="1.500" width="13" height="26" rx="6.500"/><path d="M5.500 20.500v1.500a12.500 11.500 0 0 0 25 0v-1.500M18 33.500v4M8.500 37.700h19M2 35.500 34 3" stroke-linecap="round"/></svg>
    </button>
    <button class="ml-[42px] w-[85px] h-[84px] rounded-full bg-[#336dcf] flex items-center justify-center shadow-[0_2px_6px_#0008]">
      <svg class="w-[32px] h-[32px] -mt-0.5 -ml-0.5" viewBox="0 0 32 32" fill="none" stroke="#fff" stroke-width="2"><path d="M11.500 10.500c3-6-4-11-8.500-6.500-5 5 7 19 16 24 5 4 13 1 11-6-2-5-7-5-10-1.500z" stroke-linejoin="round"/></svg>
    </button>
    <button class="ml-[42px] w-[84px] h-[84px] rounded-full border-6 border-white flex items-center justify-center shadow-[0_2px_6px_#0008]">
      <svg class="w-[38px] h-[32px]" viewBox="0 0 38 32" fill="none" stroke="#fff" stroke-width="2"><path d="M1.500 6h24.500v20H1.500zM26 13.500l10.500-4.500v14.500L26 19M5 30.500 34 1.500"/></svg>
    </button>
  </div>
</footer>

<script>
const rows = [
  ["United<br>States", 839675, 55.5, 1], ["Spain", 208389, 32], ["Italy", 187336, 31.8, 1], ["France", 157125, 31.8],
  ["Germany", 150648, 31.8], ["United<br>Kingdom", 134638, 56.5], ["Turkey", 98674, 31.5], ["Iran,<br>Islamic<br>Republic<br>of", 85996, 106],
  ["China", 83868, 31.8], ["Russia", 57999, 31.8], ["Brazil", 45757, 31.8], ["Belgium", 41889, 31.8], ["Canada", 41648, 31.8],
  ["Netherlands", 35032, 31.8], ["Switzerland", 28268, 31.8], ["Portugal", 21982, 31.8], ["India", 21370, 31.8], ["Peru", 19250, 31.8], ["", "", 31.8]
];
document.getElementById("rows").innerHTML = rows.map(([name, cases, h, on], i) => `
  <div class="grid grid-cols-[39px_135px_91px] border-b border-l border-[#d0d0d0] ${i % 2 ? "bg-[#e5e5e5]" : "bg-[#ececec]"}" style="height:${h}px">
    <span class="border-r border-[#d0d0d0] pl-[5px] flex items-center"><i class="w-[25px] h-[25px] -mt-[3px] rounded-[4px] border-2 border-[#bcbcbc] bg-linear-to-b from-[#dedede] to-[#cecece] flex items-center justify-center">${on ? '<svg class="w-5 h-4" viewBox="0 0 20 16" fill="#3c3c3c"><path d="M1 9l4-3 3 3 8-8 3 2L8 15z"/></svg>' : ""}</i></span>
    <span class="border-r border-[#d0d0d0] flex items-center ${name.length == 11 ? "pl-[2px] justify-start" : "pr-1 justify-end"} pt-0.5">${name}</span>
    <span class="flex items-center justify-end pr-[5px] pt-0.5">${cases}</span>
  </div>`).join("");
</script>
</body>
</html>
